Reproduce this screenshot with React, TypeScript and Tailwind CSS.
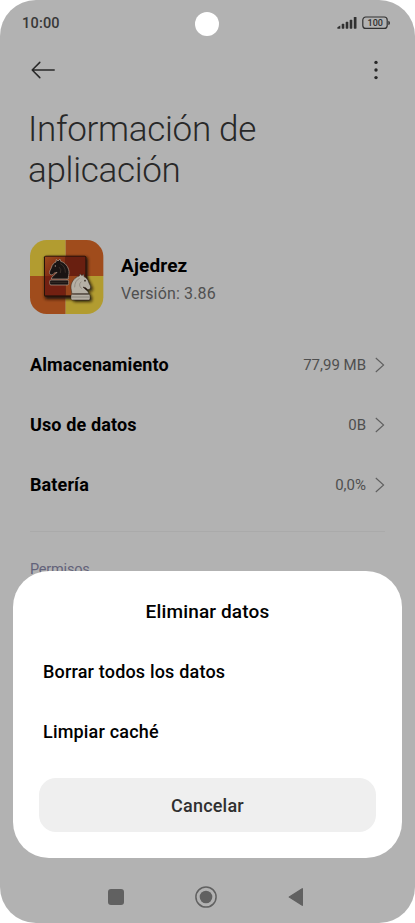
import React from "react";

const KNIGHT =
  "M94 147 C94 139 105 135 111 127 C105 129 104 128 101 131 C98 136 92 136 89 131 C86 126 92 119 94 113 C96 104 102 98 108 96 L109 88 L114 93 L120 87 L122 94 C136 98 145 110 147 124 C148 133 144 141 145 147 Z";

function AppIcon() {
  return (
    <svg width="74" height="74" viewBox="30 30 222 222" className="shrink-0">
      <defs>
        <clipPath id="tile">
          <rect x="30" y="30" width="220" height="222" rx="50" />
        </clipPath>
        <filter id="soft" x="-20%" y="-20%" width="150%" height="150%">
          <feGaussianBlur stdDeviation="4" />
        </filter>
        <linearGradient id="board" x1="0" y1="0" x2="1" y2="1">
          <stop offset="0" stopColor="#9c4a1c" />
          <stop offset="1" stopColor="#6f1b10" />
        </linearGradient>
      </defs>
      <g clipPath="url(#tile)">
        <rect x="30" y="30" width="107" height="108" fill="#b29c30" />
        <rect x="137" y="30" width="115" height="108" fill="#a04c1c" />
        <rect x="30" y="138" width="107" height="114" fill="#a04c1c" />
        <rect x="137" y="138" width="115" height="114" fill="#b29c30" />
        <rect x="74" y="80" width="130" height="128" rx="8" fill="#251408" filter="url(#soft)" />
        <rect x="72" y="77" width="127" height="123" rx="5" fill="#27130b" />
        <rect x="75" y="80" width="62" height="58" fill="url(#board)" />
        <rect x="137" y="80" width="59" height="58" fill="#691f10" />
        <rect x="75" y="138" width="62" height="58" fill="#722011" />
        <rect x="137" y="138" width="59" height="58" fill="#97451b" />
        <g transform="translate(307 50) scale(-1 1)" opacity="0.85" filter="url(#soft)">
          <path d={KNIGHT} fill="#150e08" />
          <rect x="91" y="148" width="56" height="17" rx="4" fill="#150e08" />
        </g>
        <g stroke="#a89788" strokeWidth="2.2" fill="#1a1413" strokeLinejoin="round">
          <path d={KNIGHT} />
          <rect x="89" y="150" width="57" height="15" rx="4" />
        </g>
        <path d="M121 101 Q136 108 136 128 M117 111 Q126 118 121 129" stroke="#40342e" strokeWidth="2.5" fill="none" />
        <circle cx="106" cy="108" r="2" fill="#a89788" />
        <path d="M92 157 H142" stroke="#40342e" strokeWidth="2" />
        <g transform="translate(300 44) scale(-1 1)">
          <g stroke="#302820" strokeWidth="1.5" fill="#b5b0a5" strokeLinejoin="round">
            <path d={KNIGHT} />
            <rect x="90" y="149" width="57" height="17" rx="4" />
          </g>
          <path d="M121 101 Q136 108 136 128 M116 111 Q127 120 115 132" stroke="#8c867c" strokeWidth="2.5" fill="none" />
          <circle cx="105" cy="108" r="2.5" fill="#30261e" />
          <path d="M93 157 H144" stroke="#777168" strokeWidth="2" />
        </g>
      </g>
    </svg>
  );
}

function StatusBar() {
  return (
    <div className="relative flex h-[46px] items-center justify-between pl-[22px] pr-6">
      <span className="mt-[2px] text-[14.5px] font-medium tracking-[0.2px] text-[#383838]">10:00</span>
      <div className="absolute left-[195px] top-3 size-6 rounded-full bg-white" />
      <svg width="54" height="14" viewBox="0 0 54 14" className="text-[#303030]">
        <g fill="currentColor">
          <path d="M0.4 12.7 V11.3 L3.3 9.6 V12.7 Z" />
          <rect x="4.7" y="7.8" width="2.6" height="4.9" rx="0.6" />
          <rect x="8.7" y="5.8" width="2.6" height="6.9" rx="0.6" />
          <rect x="12.7" y="3.8" width="2.6" height="8.9" rx="0.6" />
          <rect x="16.8" y="0.9" width="2.7" height="11.8" rx="0.6" />
          <path d="M51.3 4.8 Q53 5 53 6.9 Q53 8.8 51.3 9 Z" />
        </g>
        <rect x="25.8" y="1" width="24.4" height="11.4" rx="3" fill="none" stroke="currentColor" strokeWidth="1.2" />
        <text x="38.2" y="10" textAnchor="middle" fontSize="9" fontWeight="500" fill="currentColor">100</text>
      </svg>
    </div>
  );
}

function Row({ label, value }: { label: string; value: string }) {
  return (
    <div className="flex h-[60px] items-center">
      <span className="flex-1 text-[18px] font-bold leading-[26px] tracking-[0.12px] text-black">{label}</span>
      <span className="text-[15px] text-[#4f4f4f]">{value}</span>
      <svg width="10" height="16" viewBox="0 0 10 16" className="mb-px ml-[9px]">
        <path d="M0.8 1 L8.6 8 L0.8 15" fill="none" stroke="#5f5f5f" strokeWidth="1.1" />
      </svg>
    </div>
  );
}

function Dialog() {
  return (
    <div className="absolute left-[13px] top-[571px] flex h-[287px] w-[389px] flex-col rounded-[36px] bg-white px-[26px] text-[18px] font-medium text-black">
      <h2 className="mt-[11px] flex h-[59px] items-center justify-center text-[19px] leading-[29px] tracking-[0.15px]">Eliminar datos</h2>
      <div className="flex h-[60px] items-center pl-1 tracking-[0.18px]">Borrar todos los datos</div>
      <div className="flex h-[60px] items-center pl-1 tracking-[0.18px]">Limpiar caché</div>
      <button className="mt-[17px] h-[54px] w-[337px] rounded-[17px] bg-[#efefef] tracking-[0.2px] text-[#303030]">Cancelar</button>
    </div>
  );
}

export default function App() {
  return (
    <div className="bg-white">
      <div className="relative flex h-[923px] w-[415px] flex-col overflow-hidden rounded-[36px] bg-[#b2b2b2] font-['Roboto',sans-serif]">
        <StatusBar />
        <div className="flex h-12 items-center justify-between pl-[31px] pr-[37px]">
          <svg width="25" height="18" viewBox="0 0 25 18">
            <path d="M23.2 9 H1.2 M8.8 1.4 L1.2 9 L8.8 16.6" fill="none" stroke="#282828" strokeWidth="1.5" strokeLinecap="round" strokeLinejoin="round" />
          </svg>
          <svg width="4" height="20" viewBox="0 0 4 20" fill="#282828">
            <circle cx="2" cy="2.4" r="1.7" />
            <circle cx="2" cy="10" r="1.7" />
            <circle cx="2" cy="17.6" r="1.7" />
          </svg>
        </div>
        <h1 className="mt-[16px] pl-[28px] text-[35px] font-light leading-[40.5px] tracking-[-0.3px] text-[#282828]">
          Información de
          <br />
          aplicación
        </h1>
        <div className="mt-[49px] flex items-center gap-[17px] pl-[30px]">
          <AppIcon />
          <div className="pt-1">
            <div className="text-[19px] font-bold leading-[28px] tracking-[0.15px] text-black">Ajedrez</div>
            <div className="text-[16px] leading-[27px] tracking-[0.15px] text-[#505050]">Versión: 3.86</div>
          </div>
        </div>
        <div className="mt-[21px] pl-[30px] pr-[30px]">
          <Row label="Almacenamiento" value="77,99 MB" />
          <Row label="Uso de datos" value="0B" />
          <Row label="Batería" value="0,0%" />
          <div className="mt-4 h-px bg-[#aaaaaa]" />
          <div className="mt-[28px] text-[14.5px] leading-[19px] tracking-[-0.2px] text-[#62627a]">Permisos</div>
        </div>
        <div className="mb-[14px] mt-auto flex h-[24px] items-center pl-[108px]">
          <div className="size-4 rounded-[3px] bg-[#616161]" />
          <svg width="22" height="22" viewBox="0 0 22 22" className="ml-[71px]">
            <circle cx="11" cy="11" r="10.1" fill="none" stroke="#616161" strokeWidth="1.5" />
            <circle cx="11" cy="11" r="6.3" fill="#616161" />
          </svg>
          <svg width="16" height="20" viewBox="0 0 16 20" className="ml-[71px]">
            <path d="M14.3 1.8 V18.2 L1.3 10 Z" fill="#616161" stroke="#616161" strokeWidth="1.4" strokeLinejoin="round" />
          </svg>
        </div>
        <Dialog />
      </div>
    </div>
  );
}
